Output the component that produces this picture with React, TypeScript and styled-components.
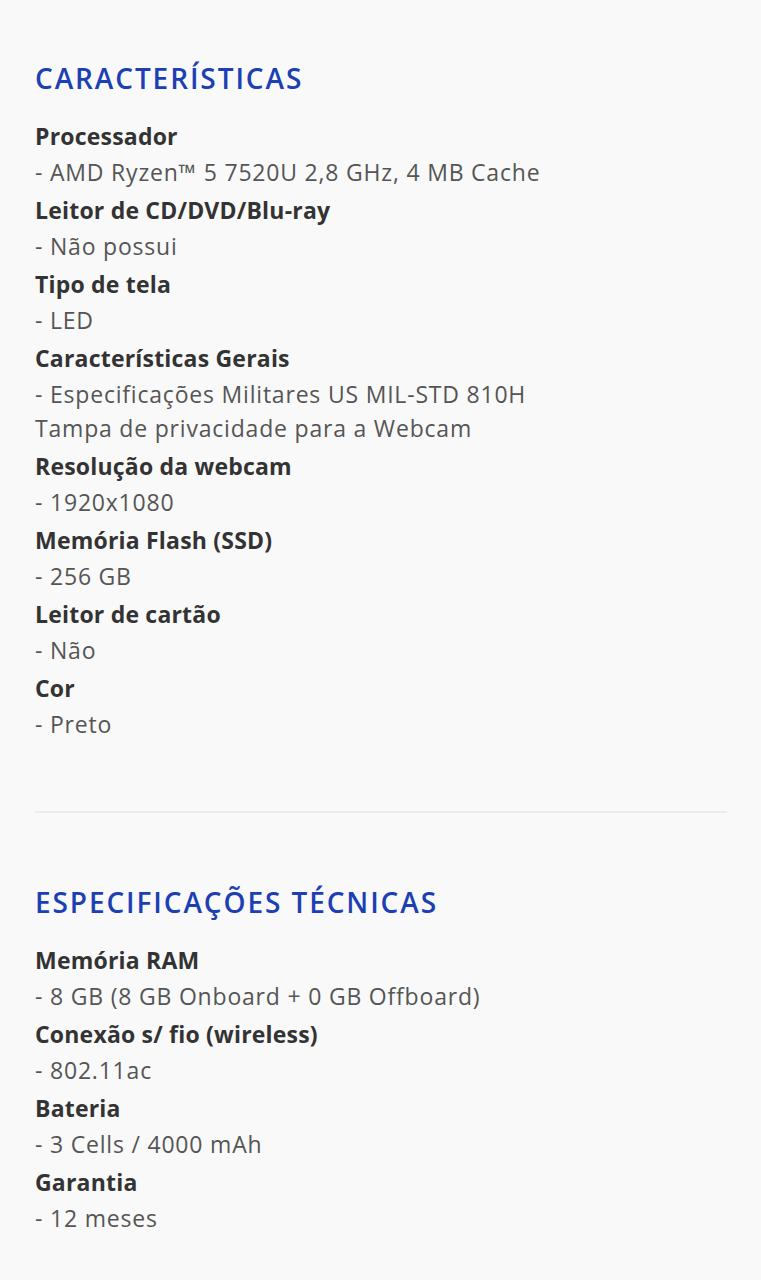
import { FC } from "react";
import styled, { createGlobalStyle } from "styled-components";

const GlobalStyle = createGlobalStyle`
  body {
    margin: 0;
    background: #f9f9f9;
    font-family: "Open Sans", Lato, sans-serif;
  }
`;

const Page = styled.main`
  padding: 56px 34px 40px 35px;
`;

const Section = styled.section`
  display: flex;
  flex-direction: column;
`;

const Title = styled.h2`
  margin: 0 0 18px;
  font-size: 28px;
  line-height: 44px;
  font-weight: 600;
  letter-spacing: 1.9px;
  color: #1c3fb4;
`;

const Item = styled.div`
  font-size: 23px;
`;

const Label = styled.div`
  line-height: 37px;
  font-weight: 700;
  letter-spacing: 0.2px;
  color: #333;
`;

const Value = styled.div`
  margin-bottom: 3px;
  line-height: 34px;
  letter-spacing: 0.8px;
  color: #555;
`;

const Divider = styled.hr`
  margin: 67px 0;
  border: 0;
  border-top: 2px solid #ececec;
`;

type Spec = { label: string; values: string[] };

const features: Spec[] = [
  { label: "Processador", values: ["- AMD Ryzen™ 5 7520U 2,8 GHz, 4 MB Cache"] },
  { label: "Leitor de CD/DVD/Blu-ray", values: ["- Não possui"] },
  { label: "Tipo de tela", values: ["- LED"] },
  {
    label: "Características Gerais",
    values: ["- Especificações Militares US MIL-STD 810H", "Tampa de privacidade para a Webcam"],
  },
  { label: "Resolução da webcam", values: ["- 1920x1080"] },
  { label: "Memória Flash (SSD)", values: ["- 256 GB"] },
  { label: "Leitor de cartão", values: ["- Não"] },
  { label: "Cor", values: ["- Preto"] },
];

const specs: Spec[] = [
  { label: "Memória RAM", values: ["- 8 GB (8 GB Onboard + 0 GB Offboard)"] },
  { label: "Conexão s/ fio (wireless)", values: ["- 802.11ac"] },
  { label: "Bateria", values: ["- 3 Cells / 4000 mAh"] },
  { label: "Garantia", values: ["- 12 meses"] },
];

const SpecList: FC<{ title: string; items: Spec[] }> = ({ title, items }) => (
  <Section>
    <Title>{title}</Title>
    {items.map((item) => (
      <Item key={item.label}>
        <Label>{item.label}</Label>
        <Value>
          {item.values.map((v) => (
            <div key={v}>{v}</div>
          ))}
        </Value>
      </Item>
    ))}
  </Section>
);

export default function App() {
  return (
    <>
      <GlobalStyle />
      <Page>
        <SpecList title="CARACTERÍSTICAS" items={features} />
        <Divider />
        <SpecList title="ESPECIFICAÇÕES TÉCNICAS" items={specs} />
      </Page>
    </>
  );
}
